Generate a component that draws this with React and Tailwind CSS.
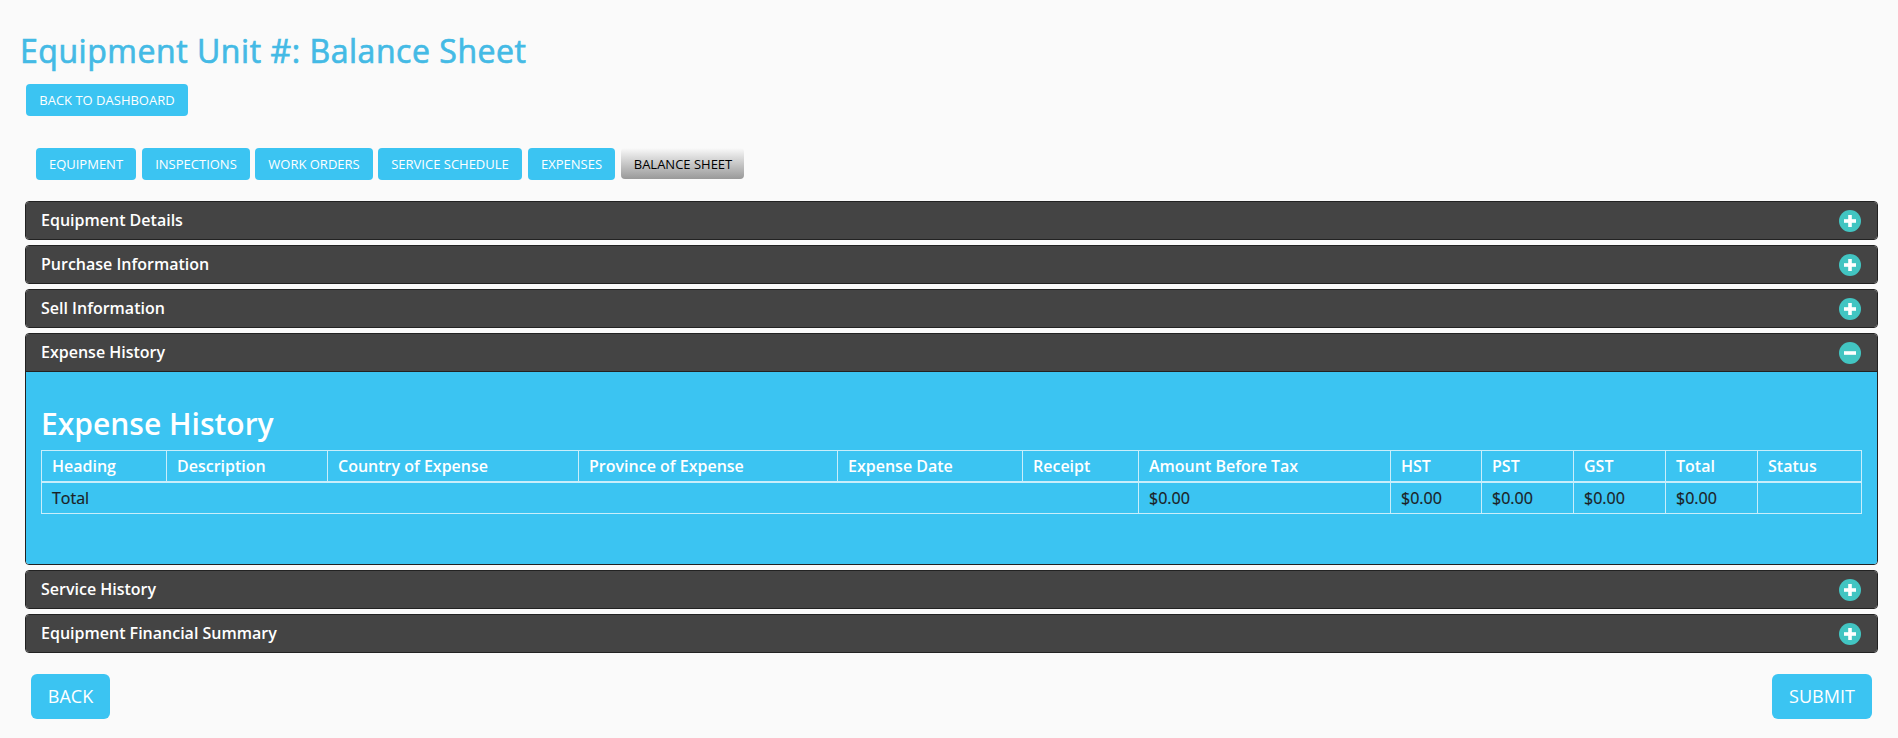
const tabs = [
  { label: 'EQUIPMENT', width: 'w-[100px]', gap: 'ml-0' },
  { label: 'INSPECTIONS', width: 'w-[108px]', gap: 'ml-1.5' },
  { label: 'WORK ORDERS', width: 'w-[118px]', gap: 'ml-[5px]' },
  { label: 'SERVICE SCHEDULE', width: 'w-[144px]', gap: 'ml-[5px]' },
  { label: 'EXPENSES', width: 'w-[87px]', gap: 'ml-1.5' },
];

const columns = [
  { label: 'Heading', width: 'w-[125px]' },
  { label: 'Description', width: 'w-[161px]' },
  { label: 'Country of Expense', width: 'w-[251px]' },
  { label: 'Province of Expense', width: 'w-[259px]' },
  { label: 'Expense Date', width: 'w-[185px]' },
  { label: 'Receipt', width: 'w-[116px]' },
  { label: 'Amount Before Tax', width: 'w-[252px]' },
  { label: 'HST', width: 'w-[91px]' },
  { label: 'PST', width: 'w-[92px]' },
  { label: 'GST', width: 'w-[92px]' },
  { label: 'Total', width: 'w-[92px]' },
  { label: 'Status', width: 'w-[104px]' },
];

function ToggleIcon({ open }) {
  return (
    <svg viewBox="0 0 22 22" className="mt-px mr-4 size-[22px]">
      <circle cx="11" cy="11" r="11" fill="#42c5c2" />
      <rect x="5" y="9.2" width="12" height="3.6" fill="#fff" />
      {!open && <rect x="9.2" y="5" width="3.6" height="12" fill="#fff" />}
    </svg>
  );
}

function Section({ title, open = false, children }) {
  return (
    <section className="overflow-hidden rounded-[4px] border border-[#222]">
      <h3 className="flex h-[37px] items-center justify-between bg-[#444] pl-[15px] text-base font-semibold text-white">
        <span className="pb-px">{title}</span>
        <ToggleIcon open={open} />
      </h3>
      {open && children}
    </section>
  );
}

function ExpenseTable() {
  const cell = 'border border-[#c9eefb] px-2.5';
  return (
    <table className="w-[1821px] table-fixed border-collapse text-base text-[#1b2024]">
      <thead>
        <tr className="h-[31px] text-left text-white">
          {columns.map((c) => (
            <th key={c.label} className={`${cell} ${c.width} border-b-2 font-semibold`}>{c.label}</th>
          ))}
        </tr>
      </thead>
      <tbody>
        <tr className="h-8 [-webkit-text-stroke:0.2px_currentColor]">
          <td className={cell} colSpan={6}>Total</td>
          {['a', 'b', 'c', 'd', 'e'].map((k) => (
            <td key={k} className={cell}>$0.00</td>
          ))}
          <td className={cell} />
        </tr>
      </tbody>
    </table>
  );
}

export default function App() {
  return (
    <main className="h-[738px] overflow-hidden bg-[#fafafa] pt-8 font-['Open_Sans','Noto_Sans',sans-serif]">
      <h1 className="ml-[20px] h-[52px] text-[32px] leading-[38px] tracking-[0.54px] text-[#44bae5] [-webkit-text-stroke:0.7px_currentColor]">
        Equipment Unit #: Balance Sheet
      </h1>
      <button className="ml-[26px] block h-8 w-[162px] rounded-[4px] bg-[#3bc4f2] pt-0.5 text-[13px] text-white">
        BACK TO DASHBOARD
      </button>
      <nav className="mt-8 ml-9 flex h-8">
        {tabs.map((t) => (
          <button key={t.label} className={`h-8 rounded-[4px] bg-[#3bc4f2] pt-0.5 text-[13px] text-white ${t.width} ${t.gap}`}>
            {t.label}
          </button>
        ))}
        <button className="ml-1.5 h-[31px] w-[123px] rounded-[4px] bg-linear-to-b from-[#fafafa] to-[#999] pt-0.5 pl-px text-[13px] text-black">
          BALANCE SHEET
        </button>
      </nav>
      <div className="mt-[21px] mr-5 ml-[25px] flex flex-col gap-[5px]">
        <Section title="Equipment Details" />
        <Section title="Purchase Information" />
        <Section title="Sell Information" />
        <Section title="Expense History" open>
          <div className="h-[193px] border-t border-[#222] bg-[#3bc4f2] pt-[34px] pl-[15px]">
            <h2 className="mb-2 h-9 text-[30px] leading-9 font-semibold text-white">Expense History</h2>
            <ExpenseTable />
          </div>
        </Section>
        <Section title="Service History" />
        <Section title="Equipment Financial Summary" />
      </div>
      <div className="mt-[21px] mr-[26px] ml-[31px] flex justify-between">
        <button className="h-[45px] w-[79px] rounded-[6px] bg-[#3bc4f2] pb-0.5 text-lg text-white">BACK</button>
        <button className="h-[45px] w-[100px] rounded-[6px] bg-[#3bc4f2] pb-0.5 text-lg text-white">SUBMIT</button>
      </div>
    </main>
  );
}
